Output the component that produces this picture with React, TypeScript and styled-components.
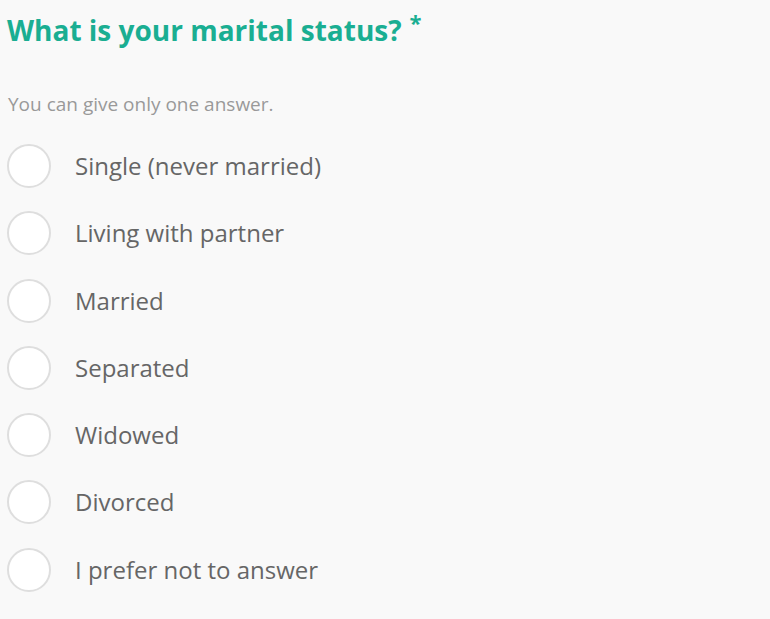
import React from 'react';
import styled, { createGlobalStyle } from 'styled-components';

const options = [
  'Single (never married)',
  'Living with partner',
  'Married',
  'Separated',
  'Widowed',
  'Divorced',
  'I prefer not to answer',
];

const GlobalStyle = createGlobalStyle`
  html, body {
    margin: 0;
    padding: 0;
    background: #f9f9f9;
  }
  body {
    font-family: 'Open Sans', 'Noto Sans', sans-serif;
  }
`;

const App = () => (
  <>
    <GlobalStyle />
    <Container>
      <Title>
        What is your marital status?
        <Required>*</Required>
      </Title>
      <Hint>You can give only one answer.</Hint>
      <OptionList>
        {options.map((o) => (
          <Option key={o}>
            <Radio type="radio" name="marital" value={o} />
            <OptionText>{o}</OptionText>
          </Option>
        ))}
      </OptionList>
    </Container>
  </>
);

export default App;

const Container = styled.div`
  display: flex;
  flex-direction: column;
  padding: 10px 8px 0 7px;
`;

const Title = styled.h2`
  margin: 0;
  color: #1aae92;
  font-size: 28px;
  font-weight: 700;
  line-height: 40px;
`;

const Required = styled.sup`
  font-size: 22px;
  margin-left: 8px;
  vertical-align: 10px;
  line-height: 0;
`;

const Hint = styled.p`
  margin: 42px 0 0 1px;
  color: #999;
  font-size: 19px;
  line-height: 24px;
`;

const OptionList = styled.div`
  display: flex;
  flex-direction: column;
  gap: 23.3px;
  margin-top: 28px;
`;

const Option = styled.label`
  display: flex;
  align-items: center;
  gap: 24px;
  cursor: pointer;
`;

const Radio = styled.input`
  appearance: none;
  margin: 0;
  width: 44px;
  height: 44px;
  border: 2px solid #dedede;
  border-radius: 50%;
  background: #fff;
  box-sizing: border-box;
  cursor: pointer;
`;

const OptionText = styled.span`
  color: #666;
  font-size: 24px;
  line-height: 30px;
`;
